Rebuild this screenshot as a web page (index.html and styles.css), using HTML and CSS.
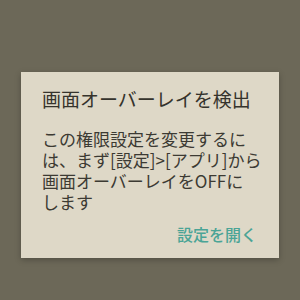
FILE: index.html
```html
<!DOCTYPE html>
<html lang="ja">
<head>
<meta charset="utf-8">
<link rel="stylesheet" href="styles.css">
</head>
<body>
<div class="screen">
  <div class="dialog">
    <div class="title">画面オーバーレイを検出</div>
    <div class="message">この権限設定を変更するに<br>は、まず[設定]&gt;[アプリ]から<br>画面オーバーレイをOFFに<br>します</div>
    <div class="actions"><span class="button">設定を開く</span></div>
  </div>
</div>
</body>
</html>
```
FILE: styles.css
```css
html, body {
  margin: 0;
  padding: 0;
}
body {
  width: 300px;
  height: 300px;
  background: #6c6858;
  font-family: "Noto Sans CJK JP", "Noto Sans", sans-serif;
}
.screen {
  width: 300px;
  height: 300px;
  padding-top: 72px;
  box-sizing: border-box;
  display: flex;
  justify-content: center;
  align-items: flex-start;
}
.dialog {
  width: 258px;
  height: 186px;
  box-sizing: border-box;
  background: #ded8c7;
  box-shadow: 0 2px 6px rgba(0,0,0,0.25);
  padding: 15px 0 0 21px;
  display: flex;
  flex-direction: column;
}
.title {
  font-size: 19px;
  line-height: 24px;
  color: #35332c;
  white-space: nowrap;
}
.message {
  margin-top: 17px;
  font-size: 17px;
  line-height: 21px;
  color: #3c3a33;
  white-space: nowrap;
}
.actions {
  margin-top: 12px;
  display: flex;
  justify-content: flex-end;
  padding-right: 22px;
}
.button {
  font-size: 16px;
  font-weight: 500;
  line-height: 20px;
  color: #4aa496;
}
```
